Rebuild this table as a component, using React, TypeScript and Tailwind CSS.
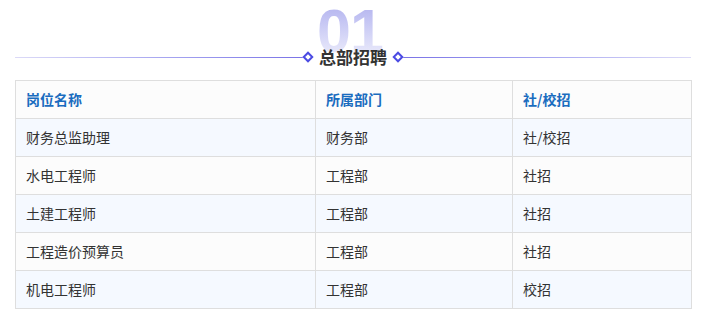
const rows = [
  ["财务总监助理", "财务部", "社/校招"],
  ["水电工程师", "工程部", "社招"],
  ["土建工程师", "工程部", "社招"],
  ["工程造价预算员", "工程部", "社招"],
  ["机电工程师", "工程部", "校招"],
];

function Diamond() {
  return <span className="block w-[8px] h-[8px] rotate-45 border-2 border-[#4b4be3] bg-white shrink-0" />;
}

export default function App() {
  return (
    <div className="w-[706px] h-[321px] bg-white px-[15px] pt-[45px] font-['Noto_Sans_CJK_SC',sans-serif] text-[#333]">
      <div className="relative flex items-center h-[24px]">
        <span
          className="absolute left-1/2 -translate-x-[calc(50%+3px)] bottom-[7px] font-['Liberation_Sans',sans-serif] font-bold text-[61px] leading-none tracking-[-1px] bg-gradient-to-b from-[#b0b0ee] to-[#f2f2fc] bg-clip-text text-transparent select-none"
        >
          01
        </span>
        <div className="flex-1 h-px bg-gradient-to-r from-[#dcdaf7] to-[#7a72e6]" />
        <Diamond />
        <span className="relative px-[7px] text-[17px] font-bold leading-[24px] text-[#333]">总部招聘</span>
        <Diamond />
        <div className="flex-1 h-px bg-gradient-to-r from-[#7a72e6] to-[#dcdaf7]" />
      </div>
      <table className="mt-[11px] w-[677px] border-collapse text-[14px] table-fixed">
        <colgroup>
          <col className="w-[300px]" />
          <col className="w-[197px]" />
          <col />
        </colgroup>
        <thead>
          <tr className="bg-[#fcfcfc] h-[38px]">
            {["岗位名称", "所属部门", "社/校招"].map((h) => (
              <th key={h} className="border border-[#dedede] px-[10px] text-left font-bold text-[#1a6cbf]">
                {h}
              </th>
            ))}
          </tr>
        </thead>
        <tbody>
          {rows.map((r, i) => (
            <tr key={i} className={`h-[38px] ${i % 2 === 0 ? "bg-[#f5f9ff]" : "bg-[#fcfcfc]"}`}>
              {r.map((c, j) => (
                <td key={j} className="border border-[#dedede] px-[10px] text-left text-[#333]">
                  {c}
                </td>
              ))}
            </tr>
          ))}
        </tbody>
      </table>
    </div>
  );
}
